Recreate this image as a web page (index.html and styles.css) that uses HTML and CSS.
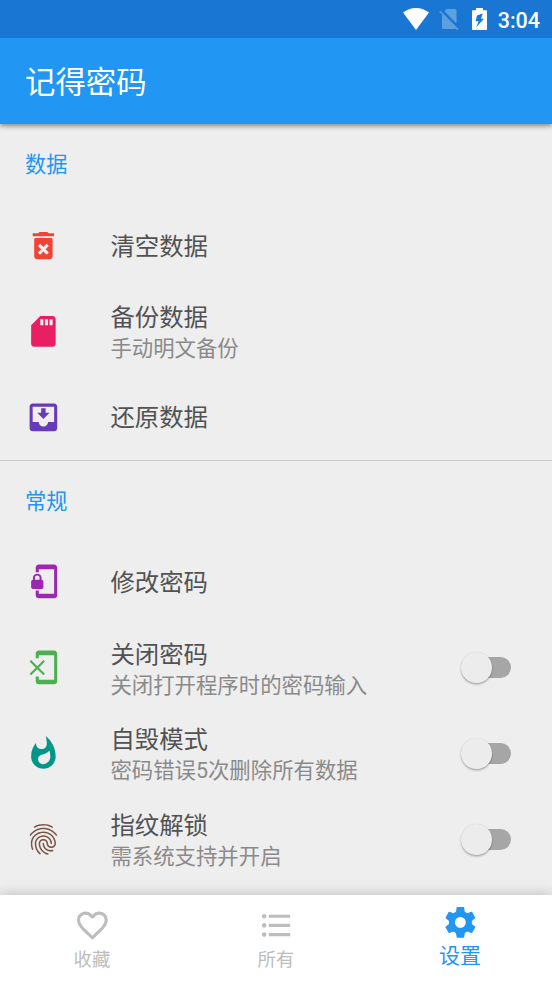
FILE: index.html
```html
<!DOCTYPE html>
<html lang="zh-CN">
<head>
<meta charset="utf-8">
<title>记得密码</title>
<link rel="stylesheet" href="styles.css">
</head>
<body>
<div class="app">
  <div class="status">
    <svg class="st-wifi" viewBox="0 0 26 22"><path d="M0 4.600C3.600 1.700 8 0 13 0s9.400 1.700 13 4.600L13 22z"/></svg>
    <svg class="st-sim" viewBox="0 0 20 22"><path class="dim" d="M7.500 1H16a1.500 1.500 0 0 1 1.500 1.500V15.500L5.300 3.200zM3 6L17 20.300 16.500 21H4.500A1.500 1.500 0 0 1 3 19.500z"/><path class="dim-line" d="M.8 3.300L19 21.600"/></svg>
    <svg class="st-battery" viewBox="0 0 15 22"><path fill-rule="evenodd" d="M4 0h7v2.300h2.800c.8 0 1.200.4 1.200 1.200v17.300c0 .8-.4 1.200-1.200 1.200H1.200C.4 22 0 21.600 0 20.800V3.500c0-.8.4-1.200 1.200-1.200H4zM10.800 5.600L5 7.400 3.600 13.200h3.100L4.200 19.200l7.800-8.400H9z"/></svg>
    <span class="clock">3:04</span>
  </div>
  <header class="bar">记得密码</header>

  <main class="list">
    <section class="group">
      <h2 class="cat">数据</h2>
      <div class="row single">
        <svg class="icon red" viewBox="0 0 24 24"><path d="M6 19c0 1.100.9 2 2 2h8c1.100 0 2-.9 2-2V8.200c0-.6-.3-1-1-1H7c-.7 0-1 .4-1 1V19zm2.460-6.620l1.410-1.410L12 13.090l2.120-2.120 1.410 1.410L13.410 14.500l2.120 2.120-1.410 1.410L12 15.910l-2.120 2.120-1.410-1.410L10.590 14.500l-2.130-2.120zM15.500 4l-1-.8h-5l-1 .8H5v2h14V4z"/></svg>
        <div class="text"><div class="title">清空数据</div></div>
      </div>
      <div class="row">
        <svg class="icon pink" viewBox="0 0 24 24"><path d="M18 2h-8L4.020 8 4 20c0 1.100.9 2 2 2h12c1.100 0 2-.9 2-2V4c0-1.100-.9-2-2-2zm-6 6h-2V4h2v4zm3 0h-2V4h2v4zm3 0h-2V4h2v4z"/></svg>
        <div class="text"><div class="title">备份数据</div><div class="sub">手动明文备份</div></div>
      </div>
      <div class="row single">
        <svg class="icon violet" viewBox="0 0 24 24"><path d="M16 9h-2.550V6h-2.900v3H8l4 4zm3-6H4.990C3.880 3 3 3.900 3 5v14c0 1.100.88 2 1.990 2H19c1.100 0 2-.9 2-2V5c0-1.100-.9-2-2-2zm0 12h-4c0 1.660-1.350 3-3 3s-3-1.340-3-3H4.990V5H19v10z"/></svg>
        <div class="text"><div class="title">还原数据</div></div>
      </div>
    </section>

    <section class="group">
      <h2 class="cat">常规</h2>
      <div class="row single">
        <svg class="icon purple" viewBox="0 0 24 24"><path d="M19 1H9c-1.100 0-2 .9-2 2v3h2V4h10v16H9v-2H7v3c0 1.100.9 2 2 2h10c1.100 0 2-.9 2-2V3c0-1.100-.9-2-2-2zm-8.200 10V9.500C10.800 8.100 9.400 7 8 7S5.200 8.100 5.200 9.500V11c-.6 0-1.200.6-1.200 1.200v3.500c0 .7.6 1.300 1.200 1.300h5.500c.7 0 1.300-.6 1.300-1.200v-3.500c0-.7-.6-1.300-1.200-1.300zm-1.300 0h-3V9.500c0-.8.7-1.300 1.500-1.300s1.500.5 1.500 1.300V11z"/></svg>
        <div class="text"><div class="title">修改密码</div></div>
      </div>
      <div class="row">
        <svg class="icon green" viewBox="0 0 24 24"><path d="M13 8.200l-1-1-4 4-4-4-1 1 4 4-4 4 1 1 4-4 4 4 1-1-4-4 4-4zM19 1H9c-1.100 0-2 .9-2 2v3h2V4h10v16H9v-2H7v3c0 1.100.9 2 2 2h10c1.100 0 2-.9 2-2V3c0-1.100-.9-2-2-2z"/></svg>
        <div class="text"><div class="title">关闭密码</div><div class="sub">关闭打开程序时的密码输入</div></div>
        <div class="switch"><div class="thumb"></div></div>
      </div>
      <div class="row">
        <svg class="icon teal" viewBox="0 0 24 24"><path d="M13.500.67s.74 2.650.74 4.800c0 2.060-1.350 3.730-3.410 3.730-2.070 0-3.630-1.670-3.630-3.730l.03-.36C5.210 7.510 4 10.620 4 14c0 4.420 3.580 8 8 8s8-3.580 8-8C20 8.610 17.410 3.800 13.500.67zM11.710 19c-1.780 0-3.220-1.400-3.220-3.140 0-1.620 1.050-2.760 2.810-3.120 1.770-.36 3.600-1.210 4.620-2.580.39 1.290.59 2.650.59 4.040 0 2.650-2.150 4.800-4.800 4.800z"/></svg>
        <div class="text"><div class="title">自毁模式</div><div class="sub">密码错误5次删除所有数据</div></div>
        <div class="switch"><div class="thumb"></div></div>
      </div>
      <div class="row">
        <svg class="icon brown" viewBox="0 0 24 24"><path d="M17.810 4.470c-.08 0-.16-.02-.23-.06C15.660 3.420 14 3 12.010 3c-1.980 0-3.860.47-5.570 1.410-.24.13-.54.04-.68-.2-.13-.24-.04-.55.2-.68C7.820 2.520 9.860 2 12.010 2c2.130 0 3.990.47 6.030 1.520.25.13.34.43.21.67-.09.18-.26.28-.44.28zM3.500 9.720c-.1 0-.2-.03-.29-.09-.23-.16-.28-.47-.12-.7.99-1.400 2.250-2.500 3.750-3.270C9.980 4.040 14 4.030 17.150 5.650c1.500.77 2.760 1.860 3.750 3.250.16.22.11.54-.12.7-.23.16-.54.11-.7-.12-.9-1.260-2.040-2.250-3.390-2.940-2.870-1.470-6.540-1.470-9.400.01-1.360.7-2.500 1.700-3.400 2.960-.08.14-.23.21-.39.21zm6.250 12.070c-.13 0-.26-.05-.35-.15-.87-.87-1.340-1.430-2.010-2.640-.69-1.230-1.050-2.730-1.050-4.340 0-2.970 2.540-5.390 5.660-5.390s5.660 2.420 5.660 5.390c0 .28-.22.5-.5.5s-.5-.22-.5-.5c0-2.420-2.090-4.390-4.660-4.390-2.570 0-4.660 1.970-4.660 4.390 0 1.440.32 2.770.93 3.850.64 1.150 1.080 1.640 1.850 2.420.19.2.19.51 0 .71-.11.1-.24.15-.37.15zm7.170-1.850c-1.190 0-2.240-.3-3.100-.89-1.490-1.010-2.380-2.650-2.380-4.390 0-.28.22-.5.5-.5s.5.22.5.5c0 1.410.72 2.740 1.940 3.560.71.48 1.540.71 2.540.71.24 0 .64-.03 1.040-.1.27-.05.53.13.58.41.05.27-.13.53-.41.58-.57.11-1.070.12-1.210.12zM14.910 22c-.04 0-.09-.01-.13-.02-1.590-.44-2.630-1.030-3.720-2.100-1.400-1.390-2.170-3.240-2.170-5.220 0-1.620 1.380-2.940 3.080-2.940 1.700 0 3.080 1.320 3.080 2.940 0 1.070.93 1.940 2.080 1.940s2.080-.87 2.080-1.940c0-3.770-3.250-6.830-7.250-6.830-2.840 0-5.440 1.580-6.610 4.030-.39.81-.59 1.760-.59 2.800 0 .78.07 2.010.67 3.610.1.26-.03.55-.29.64-.26.1-.55-.04-.64-.29-.49-1.310-.73-2.610-.73-3.960 0-1.200.23-2.290.68-3.240 1.330-2.790 4.280-4.600 7.510-4.600 4.550 0 8.250 3.510 8.250 7.830 0 1.620-1.380 2.940-3.080 2.940s-3.080-1.320-3.080-2.940c0-1.070-.93-1.940-2.080-1.940s-2.080.87-2.080 1.940c0 1.710.66 3.310 1.870 4.510.95.94 1.860 1.460 3.270 1.850.27.07.42.35.35.61-.05.23-.26.38-.47.38z"/></svg>
        <div class="text"><div class="title">指纹解锁</div><div class="sub">需系统支持并开启</div></div>
        <div class="switch"><div class="thumb"></div></div>
      </div>
    </section>
  </main>

  <nav class="nav">
    <div class="tab">
      <svg class="icon" viewBox="0 0 24 24"><path d="M16.500 3c-1.740 0-3.410.81-4.500 2.090C10.910 3.810 9.240 3 7.500 3 4.420 3 2 5.420 2 8.500c0 3.780 3.400 6.860 8.550 11.540L12 21.350l1.450-1.320C18.600 15.360 22 12.280 22 8.500 22 5.420 19.580 3 16.500 3zm-4.400 15.550l-.1.1-.1-.1C7.140 14.240 4 11.390 4 8.500 4 6.500 5.500 5 7.500 5c1.540 0 3.040.99 3.570 2.360h1.870C13.460 5.990 14.960 5 16.500 5c2 0 3.500 1.500 3.500 3.500 0 2.890-3.140 5.740-7.900 10.050z"/></svg>
      <span>收藏</span>
    </div>
    <div class="tab">
      <svg class="icon" viewBox="0 0 24 24"><path d="M4 10.500c-.83 0-1.500.67-1.500 1.500s.67 1.500 1.500 1.500 1.500-.67 1.500-1.500-.67-1.500-1.500-1.500zm0-6c-.83 0-1.500.67-1.500 1.500S3.170 7.500 4 7.500 5.500 6.830 5.500 6 4.830 4.500 4 4.500zm0 12c-.83 0-1.500.67-1.500 1.500s.67 1.500 1.500 1.500 1.500-.67 1.500-1.500-.67-1.500-1.500-1.500zM7 19h14v-2H7v2zm0-6h14v-2H7v2zm0-8v2h14V5H7z"/></svg>
      <span>所有</span>
    </div>
    <div class="tab active">
      <svg class="icon" viewBox="0 0 24 24"><path d="M19.430 12.980c.04-.32.07-.64.07-.98s-.03-.66-.07-.98l2.110-1.650c.19-.15.24-.42.12-.64l-2-3.460c-.12-.22-.39-.3-.61-.22l-2.490 1c-.52-.4-1.080-.73-1.690-.98l-.38-2.650C14.460 2.180 14.250 2 14 2h-4c-.25 0-.46.18-.49.42l-.38 2.650c-.61.25-1.170.59-1.690.98l-2.490-1c-.23-.09-.49 0-.61.22l-2 3.460c-.13.22-.07.49.12.64l2.110 1.650c-.04.32-.07.65-.07.98s.03.66.07.98l-2.110 1.650c-.19.15-.24.42-.12.64l2 3.460c.12.22.39.3.61.22l2.490-1c.52.4 1.080.73 1.690.98l.38 2.650c.03.24.24.42.49.42h4c.25 0 .46-.18.49-.42l.38-2.650c.61-.25 1.170-.59 1.690-.98l2.490 1c.23.09.49 0 .61-.22l2-3.460c.12-.22.07-.49-.12-.64l-2.110-1.650zM12 15.500c-1.930 0-3.500-1.570-3.500-3.500s1.570-3.500 3.500-3.500 3.500 1.570 3.500 3.500-1.570 3.500-3.500 3.500z"/></svg>
      <span>设置</span>
    </div>
  </nav>
</div>
</body>
</html>
```
FILE: styles.css
```css
* { box-sizing: border-box; }
body {
  margin: 0;
  background: #eee;
  font-family: Roboto, "Noto Sans CJK SC", sans-serif;
}
svg { display: block; fill: currentColor; flex: none; }

.app {
  display: flex;
  flex-direction: column;
  height: 981px;
  overflow: hidden;
}

.status {
  flex: none;
  display: flex;
  align-items: flex-start;
  justify-content: flex-end;
  height: 38px;
  padding: 8px 12px 0 0;
  background: #1976d2;
  color: #fff;
  z-index: 2;
}
.st-wifi { width: 26px; height: 22px; margin-right: 10px; }
.st-sim { width: 20px; height: 22px; margin-right: 13px; }
.st-battery { width: 15px; height: 22px; margin-right: 11px; }
.dim { fill: #5e9fe0; }
.dim-line { fill: none; stroke: #5e9fe0; stroke-width: 1.600; }
.clock { font-size: 21.500px; line-height: 25px; font-weight: 500; }

.bar {
  flex: none;
  height: 86px;
  padding: 2px 0 0 25px;
  line-height: 86px;
  font-size: 30.400px;
  color: #fff;
  background: #2196f3;
  box-shadow: 0 2px 5px rgba(0, 0, 0, .45);
  z-index: 1;
}

.list { flex: 1; min-height: 0; }
.group:first-child { height: 336px; }
.group + .group { border-top: 1px solid #c9c9c9; }
.cat {
  margin: 0;
  height: 78.600px;
  padding-left: 25px;
  line-height: 82px;
  font-size: 21.200px;
  font-weight: 400;
  color: #2196f3;
}
.group + .group .cat { height: 77.800px; }
.row {
  display: flex;
  align-items: center;
  height: 85.900px;
  padding: 0 41px 0 24.600px;
}
.icon { width: 36.800px; height: 36.800px; }
.text { flex: 1; margin-left: 49px; padding-top: 3.750px; }
.single .text { padding-top: 1px; }
.title { font-size: 24.400px; line-height: 31px; color: #525252; }
.sub { font-size: 21.400px; line-height: 31px; color: #8a8a8a; }

.red { color: #f44336; }
.pink { color: #e91e63; }
.violet { color: #673ab7; }
.purple { color: #9c27b0; }
.green { color: #4caf50; }
.teal { color: #009688; }
.brown { color: #795548; }

.switch {
  display: flex;
  align-items: center;
  width: 46px;
  height: 21px;
  border-radius: 11px;
  background: #a6a6a6;
}
.thumb {
  flex: none;
  width: 30.600px;
  height: 30.600px;
  margin-left: -4px;
  border-radius: 50%;
  background: #ececec;
  box-shadow: 0 1.500px 2px rgba(0, 0, 0, .28), 0 0 1px rgba(0, 0, 0, .12);
}

.nav {
  flex: none;
  display: flex;
  height: 86px;
  background: #fff;
  box-shadow: 0 -1px 12px rgba(0, 0, 0, .2);
  z-index: 1;
}
.tab {
  flex: 1;
  display: flex;
  flex-direction: column;
  align-items: center;
  padding-top: 12.300px;
  color: #bdbdbd;
  font-size: 18.400px;
  line-height: 31px;
}
.tab.active {
  padding-top: 9.300px;
  color: #2196f3;
  font-size: 21px;
}
```
